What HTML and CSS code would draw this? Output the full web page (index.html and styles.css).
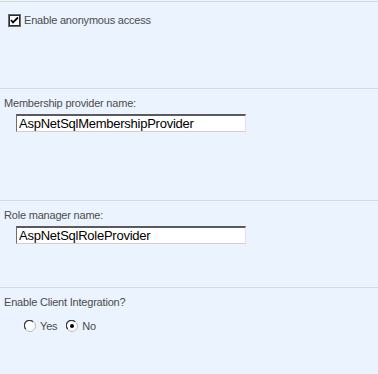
FILE: index.html
```
<!DOCTYPE html>
<html lang="en">
<head>
    <meta charset="UTF-8">
    <title>Authentication settings</title>
    <link rel="stylesheet" href="styles.css">
</head>
<body>
    <div class="section section-anon">
        <label class="check-row">
            <svg class="checkbox" width="13" height="13" viewBox="0 0 13 13">
                <rect x="0.5" y="0.5" width="12" height="12" fill="#fff" stroke="#6b6b6b"/>
                <rect x="1.5" y="1.5" width="10" height="10" fill="none" stroke="#2b2b2b" stroke-width="1"/>
                <path d="M3 6 L5 8.5 L10 3.5" fill="none" stroke="#000" stroke-width="1.8"/>
            </svg>
            <span>Enable anonymous access</span>
        </label>
    </div>

    <div class="section section-member">
        <div class="label">Membership provider name:</div>
        <input class="field" type="text" value="AspNetSqlMembershipProvider">
    </div>

    <div class="section section-role">
        <div class="label">Role manager name:</div>
        <input class="field" type="text" value="AspNetSqlRoleProvider">
    </div>

    <div class="section section-client">
        <div class="label">Enable Client Integration?</div>
        <div class="radios">
            <label class="radio-item">
                <svg class="radio" width="12" height="12" viewBox="0 0 12 12">
                    <circle cx="6" cy="6" r="5.5" fill="#fff" stroke="#b8b8b8"/>
                    <path d="M1.8 9 A5 5 0 0 1 9 1.8" fill="none" stroke="#3a3a3a" stroke-width="1.2"/>
                </svg>
                <span>Yes</span>
            </label>
            <label class="radio-item">
                <svg class="radio" width="12" height="12" viewBox="0 0 12 12">
                    <circle cx="6" cy="6" r="5.5" fill="#fff" stroke="#b8b8b8"/>
                    <path d="M1.8 9 A5 5 0 0 1 9 1.8" fill="none" stroke="#3a3a3a" stroke-width="1.2"/>
                    <circle cx="6" cy="6" r="2" fill="#000"/>
                </svg>
                <span>No</span>
            </label>
        </div>
    </div>
</body>
</html>
```

FILE: styles.css
```
body {
    margin: 0;
    padding-top: 1px;
    background-color: #ebf3ff;
    font-family: "Liberation Sans", Arial, sans-serif;
    font-size: 11px;
    letter-spacing: -0.2px;
    color: #4c4c4c;
}
.section {
    border-top: 1px solid #d6dbe2;
    box-sizing: border-box;
}
.section-anon {
    height: 87px;
    padding: 12px 0 0 8px;
}
.section-member {
    height: 112px;
    padding: 8px 0 0 4px;
}
.section-role {
    height: 87px;
    padding: 8px 0 0 4px;
}
.section-client {
    height: 87px;
    padding: 8px 0 0 4px;
}
.check-row {
    display: flex;
    align-items: center;
    gap: 3px;
    line-height: 13px;
}
.checkbox, .radio {
    display: block;
    flex: none;
}
.label {
    line-height: 13px;
}
.field {
    display: block;
    margin: 4px 0 0 12px;
    width: 230px;
    height: 18px;
    box-sizing: border-box;
    padding: 0 2px;
    font-family: "Liberation Sans", Arial, sans-serif;
    font-size: 13px;
    letter-spacing: -0.25px;
    color: #000;
    background: #fff;
    border-style: solid;
    border-width: 2px 1px 1px 1px;
    border-color: #5a5a5a #e4e2dc #d4d0c8 #6f6f6f;
    outline: none;
}
.radios {
    display: flex;
    gap: 9px;
    margin: 10px 0 0 20px;
}
.radio-item {
    display: flex;
    align-items: center;
    gap: 4px;
    line-height: 14px;
}
```
